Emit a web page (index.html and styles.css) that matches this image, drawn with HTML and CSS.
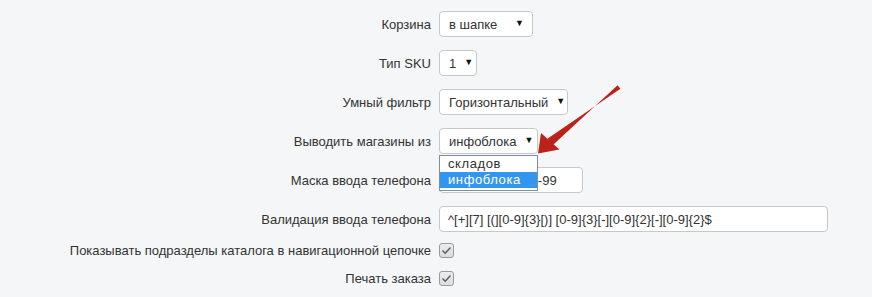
FILE: index.html
```html
<!DOCTYPE html>
<html lang="ru">
<head>
  <meta charset="UTF-8" />
  <title>Настройки</title>
  <link rel="stylesheet" href="styles.css">
</head>
<body>
  <div class="page">
    <div class="form">
      <div class="row">
        <label class="label">Корзина</label>
        <div class="select w-basket">в шапке<span class="caret">▼</span></div>
      </div>
      <div class="row">
        <label class="label">Тип SKU</label>
        <div class="select w-sku">1<span class="caret">▼</span></div>
      </div>
      <div class="row">
        <label class="label">Умный фильтр</label>
        <div class="select w-filter">Горизонтальный<span class="caret">▼</span></div>
      </div>
      <div class="row">
        <label class="label">Выводить магазины из</label>
        <div class="select-wrap">
          <div class="select w-stores">инфоблока<span class="caret">▼</span></div>
          <ul class="dropdown">
            <li>складов</li>
            <li class="active">инфоблока</li>
          </ul>
        </div>
      </div>
      <div class="row">
        <label class="label">Маска ввода телефона</label>
        <input class="input w-mask" type="text" value="+7 (999) 999-99-99" />
      </div>
      <div class="row">
        <label class="label">Валидация ввода телефона</label>
        <input class="input w-valid" type="text" value="^[+][7] [(][0-9]{3}[)] [0-9]{3}[-][0-9]{2}[-][0-9]{2}$" />
      </div>
    </div>

    <div class="checks">
      <div class="row check-row">
        <label class="label">Показывать подразделы каталога в навигационной цепочке</label>
        <span class="checkbox">
          <svg viewBox="0 0 15 15" width="15" height="15"><path d="M3.5 7.5 L6.2 10.2 L11.5 4.5" fill="none" stroke="#5b5b5b" stroke-width="1.4"/></svg>
        </span>
      </div>
      <div class="row check-row">
        <label class="label">Печать заказа</label>
        <span class="checkbox">
          <svg viewBox="0 0 15 15" width="15" height="15"><path d="M3.5 7.5 L6.2 10.2 L11.5 4.5" fill="none" stroke="#5b5b5b" stroke-width="1.4"/></svg>
        </span>
      </div>
    </div>
  </div>

  <!-- annotation arrow drawn over the form -->
  <svg class="annotation" width="872" height="297" viewBox="0 0 872 297">
    <polygon points="620.4,88.8 617.6,85.2 552.6,145.2 547.4,138.8" fill="#bd2219"/>
    <polygon points="538,153.5 541,133 559.5,149.5" fill="#bd2219"/>
  </svg>
</body>
</html>
```

FILE: styles.css
```css
body {
  margin: 0;
  padding: 0;
  background-color: #f4f6f7;
  font-family: Arial, "Liberation Sans", sans-serif;
  font-size: 13px;
  color: #333;
}

.page {
  position: relative;
  padding-top: 11px;
}

.form {
  display: flex;
  flex-direction: column;
  gap: 13px;
}

.row {
  display: grid;
  grid-template-columns: 431px auto;
  column-gap: 8px;
  align-items: center;
  justify-content: start;
  height: 26px;
}

.label {
  text-align: right;
  white-space: nowrap;
}

.select {
  box-sizing: border-box;
  height: 26px;
  display: flex;
  align-items: center;
  justify-content: space-between;
  padding: 0 8px 0 9px;
  background: #fff;
  border: 1px solid #c8c8c8;
  border-radius: 4px;
  white-space: nowrap;
}

.caret {
  font-size: 9px;
  color: #111;
  margin-left: 8px;
  margin-top: -3px;
}

.w-basket { width: 94px; }
.w-sku { width: 38px; }
.w-filter { width: 129px; }
.w-stores { width: 99px; }

.select-wrap {
  position: relative;
}

.dropdown {
  position: absolute;
  top: 27px;
  left: 0;
  z-index: 2;
  box-sizing: border-box;
  width: 99px;
  margin: 0;
  padding: 0 0 2px;
  list-style: none;
  background: #fff;
  border: 1px solid #7b8fa8;
}

.dropdown li {
  height: 16px;
  line-height: 16px;
  padding-left: 8px;
  letter-spacing: 0.6px;
}

.dropdown li.active {
  background: #3296f0;
  color: #fff;
}

.input {
  box-sizing: border-box;
  height: 26px;
  padding: 0 8px 0 5px;
  background: #fff;
  border: 1px solid #c8c8c8;
  border-radius: 4px;
  font-family: Arial, "Liberation Sans", sans-serif;
  font-size: 13px;
  color: #333;
  outline: none;
}

.w-mask { width: 144px; }
.w-valid { width: 389px; padding-left: 8px; }

.checks {
  margin-top: 4px;
}

.check-row {
  height: 28px;
}

.checkbox {
  box-sizing: border-box;
  width: 15px;
  height: 15px;
  display: flex;
  border: 1px solid #9a9a9a;
  border-radius: 3px;
  background: linear-gradient(#ededed, #dcdcdc);
}

.checkbox svg {
  margin: -1px;
}

.annotation {
  position: absolute;
  top: 0;
  left: 0;
  pointer-events: none;
}
```
